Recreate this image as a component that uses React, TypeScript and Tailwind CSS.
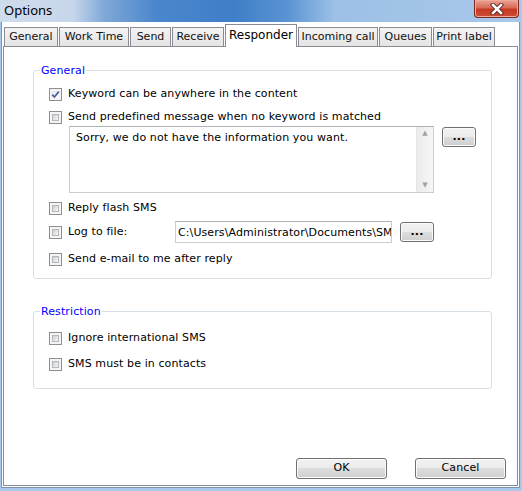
import { useState } from "react";

const tabs = [
  { label: "General", w: "w-[54px]" },
  { label: "Work Time", w: "w-[70px]" },
  { label: "Send", w: "w-[41px]" },
  { label: "Receive", w: "w-[52px]" },
  { label: "Responder", w: "w-[72px]" },
  { label: "Incoming call", w: "w-[80px]" },
  { label: "Queues", w: "w-[53px]" },
  { label: "Print label", w: "w-[62px]" },
];

const CheckBox = ({ checked, onClick }: { checked: boolean; onClick: () => void }) => {
  return (
    <span
      onClick={onClick}
      className="relative flex w-[13px] h-[13px] shrink-0 border border-[#8e8f8f] bg-[#f4f4f4] p-[2px]"
    >
      <span
        className={
          checked
            ? "flex-1 bg-[linear-gradient(135deg,#e4e4e4,#ffffff)]"
            : "flex-1 border border-[#b4b8bd] bg-[linear-gradient(135deg,#cdd0d4,#f6f6f6)]"
        }
      />
      {checked && (
        <svg className="absolute left-[1px] top-[1px]" width="9" height="9" viewBox="0 0 9 9">
          <path d="M1.2 4.6 L3.4 7 L7.8 1.6" fill="none" stroke="#4a5e9c" strokeWidth="1.7" />
        </svg>
      )}
    </span>
  );
};

const Row = ({ label, checked, onToggle }: { label: string; checked: boolean; onToggle: () => void }) => {
  return (
    <div className="flex items-center h-[16px] gap-[6px]">
      <CheckBox checked={checked} onClick={onToggle} />
      <span className="leading-[16px]">{label}</span>
    </div>
  );
};

const WinButton = ({ children, className }: { children: React.ReactNode; className: string }) => {
  return (
    <button
      className={
        "flex items-center justify-center border border-[#707070] rounded-[3px] bg-[linear-gradient(#f2f2f2_0%,#ebebeb_50%,#dddddd_50%,#cfcfcf_100%)] shadow-[inset_0_0_0_1px_#fbfbfb] text-[11px] text-black " +
        className
      }
    >
      {children}
    </button>
  );
};

export default function App() {
  const [checks, setChecks] = useState({
    keyword: true,
    predefined: false,
    flash: false,
    log: false,
    email: false,
    international: false,
    contacts: false,
  });
  const [message, setMessage] = useState("Sorry, we do not have the information you want.");
  const [logPath, setLogPath] = useState("C:\\Users\\Administrator\\Documents\\SMS\\log.txt");

  const toggle = (key: keyof typeof checks) => setChecks({ ...checks, [key]: !checks[key] });

  return (
    <div className="w-[522px] h-[491px] flex flex-col bg-[#a9c8ea] pl-[1px] pr-[2px] pb-[3px] font-['DejaVu_Sans',sans-serif] text-[11px] tracking-[0.1px] text-black overflow-hidden">
      {/* title bar */}
      <div className="h-[22px] -ml-[1px] -mr-[2px] flex items-start justify-between bg-[linear-gradient(90deg,#cfdcec_0%,#c6d6ea_14%,#7fa8d8_20%,#4a86cc_30%,#3f7fc8_45%,#5a93d2_55%,#9cc0e6_64%,#a9c8ea_100%)]">
        <span className="ml-[4px] mt-[2px] text-[13px] leading-[16px] tracking-normal font-['Noto_Sans',sans-serif] text-black">
          Options
        </span>
        <div className="mr-[3px] w-[45px] h-[18px] flex items-center justify-center rounded-b-[4px] border border-t-0 border-[#7b2b22] bg-[linear-gradient(#eba597_0%,#d86a57_45%,#c63a24_55%,#cc4d36_100%)] shadow-[inset_0_0_0_1px_#eea99c]">
          <svg width="14" height="12" viewBox="0 0 14 12">
            <path d="M3 2 L11 10 M11 2 L3 10" stroke="#5a1e18" strokeWidth="4.4" strokeLinecap="square" />
            <path d="M3 2 L11 10 M11 2 L3 10" stroke="#ffffff" strokeWidth="2.6" strokeLinecap="square" />
          </svg>
        </div>
      </div>

      {/* client area */}
      <div className="flex-1 flex flex-col bg-white border border-t-0 border-[#7f93ad] px-[1px] pb-[1px]">
        <div className="h-[24px] pt-[2px] flex items-end gap-[1px] pl-[1px]">
          {tabs.map((t) =>
            t.label === "Responder" ? (
              <div
                key={t.label}
                className={t.w + " relative z-10 -mb-[1px] h-[23px] flex justify-center pt-[3px] bg-white border border-b-0 border-[#898c95] leading-[14px] text-[12px] tracking-normal"}
              >
                {t.label}
              </div>
            ) : (
              <div
                key={t.label}
                className={t.w + " h-[19px] flex items-center justify-center bg-[linear-gradient(#f3f3f3,#e4e4e4)] border border-b-0 border-[#898c95] leading-[14px] text-[#111] tracking-normal"}
              >
                {t.label}
              </div>
            )
          )}
        </div>

        <div className="flex-1 flex flex-col border border-[#898c95] bg-white">
          <fieldset className="mt-[17px] ml-[29px] mr-[25px] border border-[#d5dfe5] rounded-[3px] px-0 pt-0 pb-[11px]">
            <legend className="ml-[6px] px-[1px] leading-[13px] text-[#0000ff]">General</legend>
            <div className="pl-[15px] flex flex-col">
              <div className="mt-[9px]">
                <Row label="Keyword can be anywhere in the content" checked={checks.keyword} onToggle={() => toggle("keyword")} />
              </div>
              <div className="mt-[7px]">
                <Row
                  label="Send predefined message when no keyword is matched"
                  checked={checks.predefined}
                  onToggle={() => toggle("predefined")}
                />
              </div>
              <div className="mt-[1px] ml-[20px] flex items-start gap-[8px]">
                <div className="w-[365px] h-[67px] flex border border-[#c9ccd2] border-t-[#aeb1b8]">
                  <textarea
                    readOnly
                    value={message}
                    onChange={(e) => setMessage(e.target.value)}
                    className="flex-1 resize-none overflow-hidden outline-none pl-[6px] pt-[4px] leading-[13px] text-[11px]"
                  />
                  <div className="w-[17px] flex flex-col justify-between items-center bg-[linear-gradient(90deg,#ececec,#f6f6f6)] border-l border-[#e6e6e6] text-[#a2a2a2] text-[7px] leading-[13px]">
                    <span>▲</span>
                    <span>▼</span>
                  </div>
                </div>
                <WinButton className="mt-[1px] w-[34px] h-[20px] font-bold leading-[10px]">...</WinButton>
              </div>
              <div className="mt-[7px]">
                <Row label="Reply flash SMS" checked={checks.flash} onToggle={() => toggle("flash")} />
              </div>
              <div className="mt-[5px] h-[22px] flex items-center">
                <CheckBox checked={checks.log} onClick={() => toggle("log")} />
                <span className="ml-[6px] w-[107px]">Log to file:</span>
                <input
                  value={logPath}
                  onChange={(e) => setLogPath(e.target.value)}
                  className="w-[217px] h-[22px] border border-[#c9ccd2] border-t-[#aeb1b8] pl-[2px] outline-none text-[11px]"
                />
                <WinButton className="ml-[8px] w-[34px] h-[20px] font-bold leading-[10px]">...</WinButton>
              </div>
              <div className="mt-[8px]">
                <Row label="Send e-mail to me after reply" checked={checks.email} onToggle={() => toggle("email")} />
              </div>
            </div>
          </fieldset>

          <fieldset className="mt-[26px] ml-[29px] mr-[25px] border border-[#d5dfe5] rounded-[3px] px-0 pt-0 pb-[16px]">
            <legend className="ml-[6px] px-[1px] leading-[13px] text-[#0000ff]">Restriction</legend>
            <div className="pl-[15px] flex flex-col">
              <div className="mt-[12px]">
                <Row label="Ignore international SMS" checked={checks.international} onToggle={() => toggle("international")} />
              </div>
              <div className="mt-[10px]">
                <Row label="SMS must be in contacts" checked={checks.contacts} onToggle={() => toggle("contacts")} />
              </div>
            </div>
          </fieldset>

          <div className="mt-auto mb-[6px] mr-[11px] flex justify-end gap-[28px]">
            <WinButton className="w-[91px] h-[21px]">OK</WinButton>
            <WinButton className="w-[91px] h-[21px]">Cancel</WinButton>
          </div>
        </div>
      </div>
    </div>
  );
}
